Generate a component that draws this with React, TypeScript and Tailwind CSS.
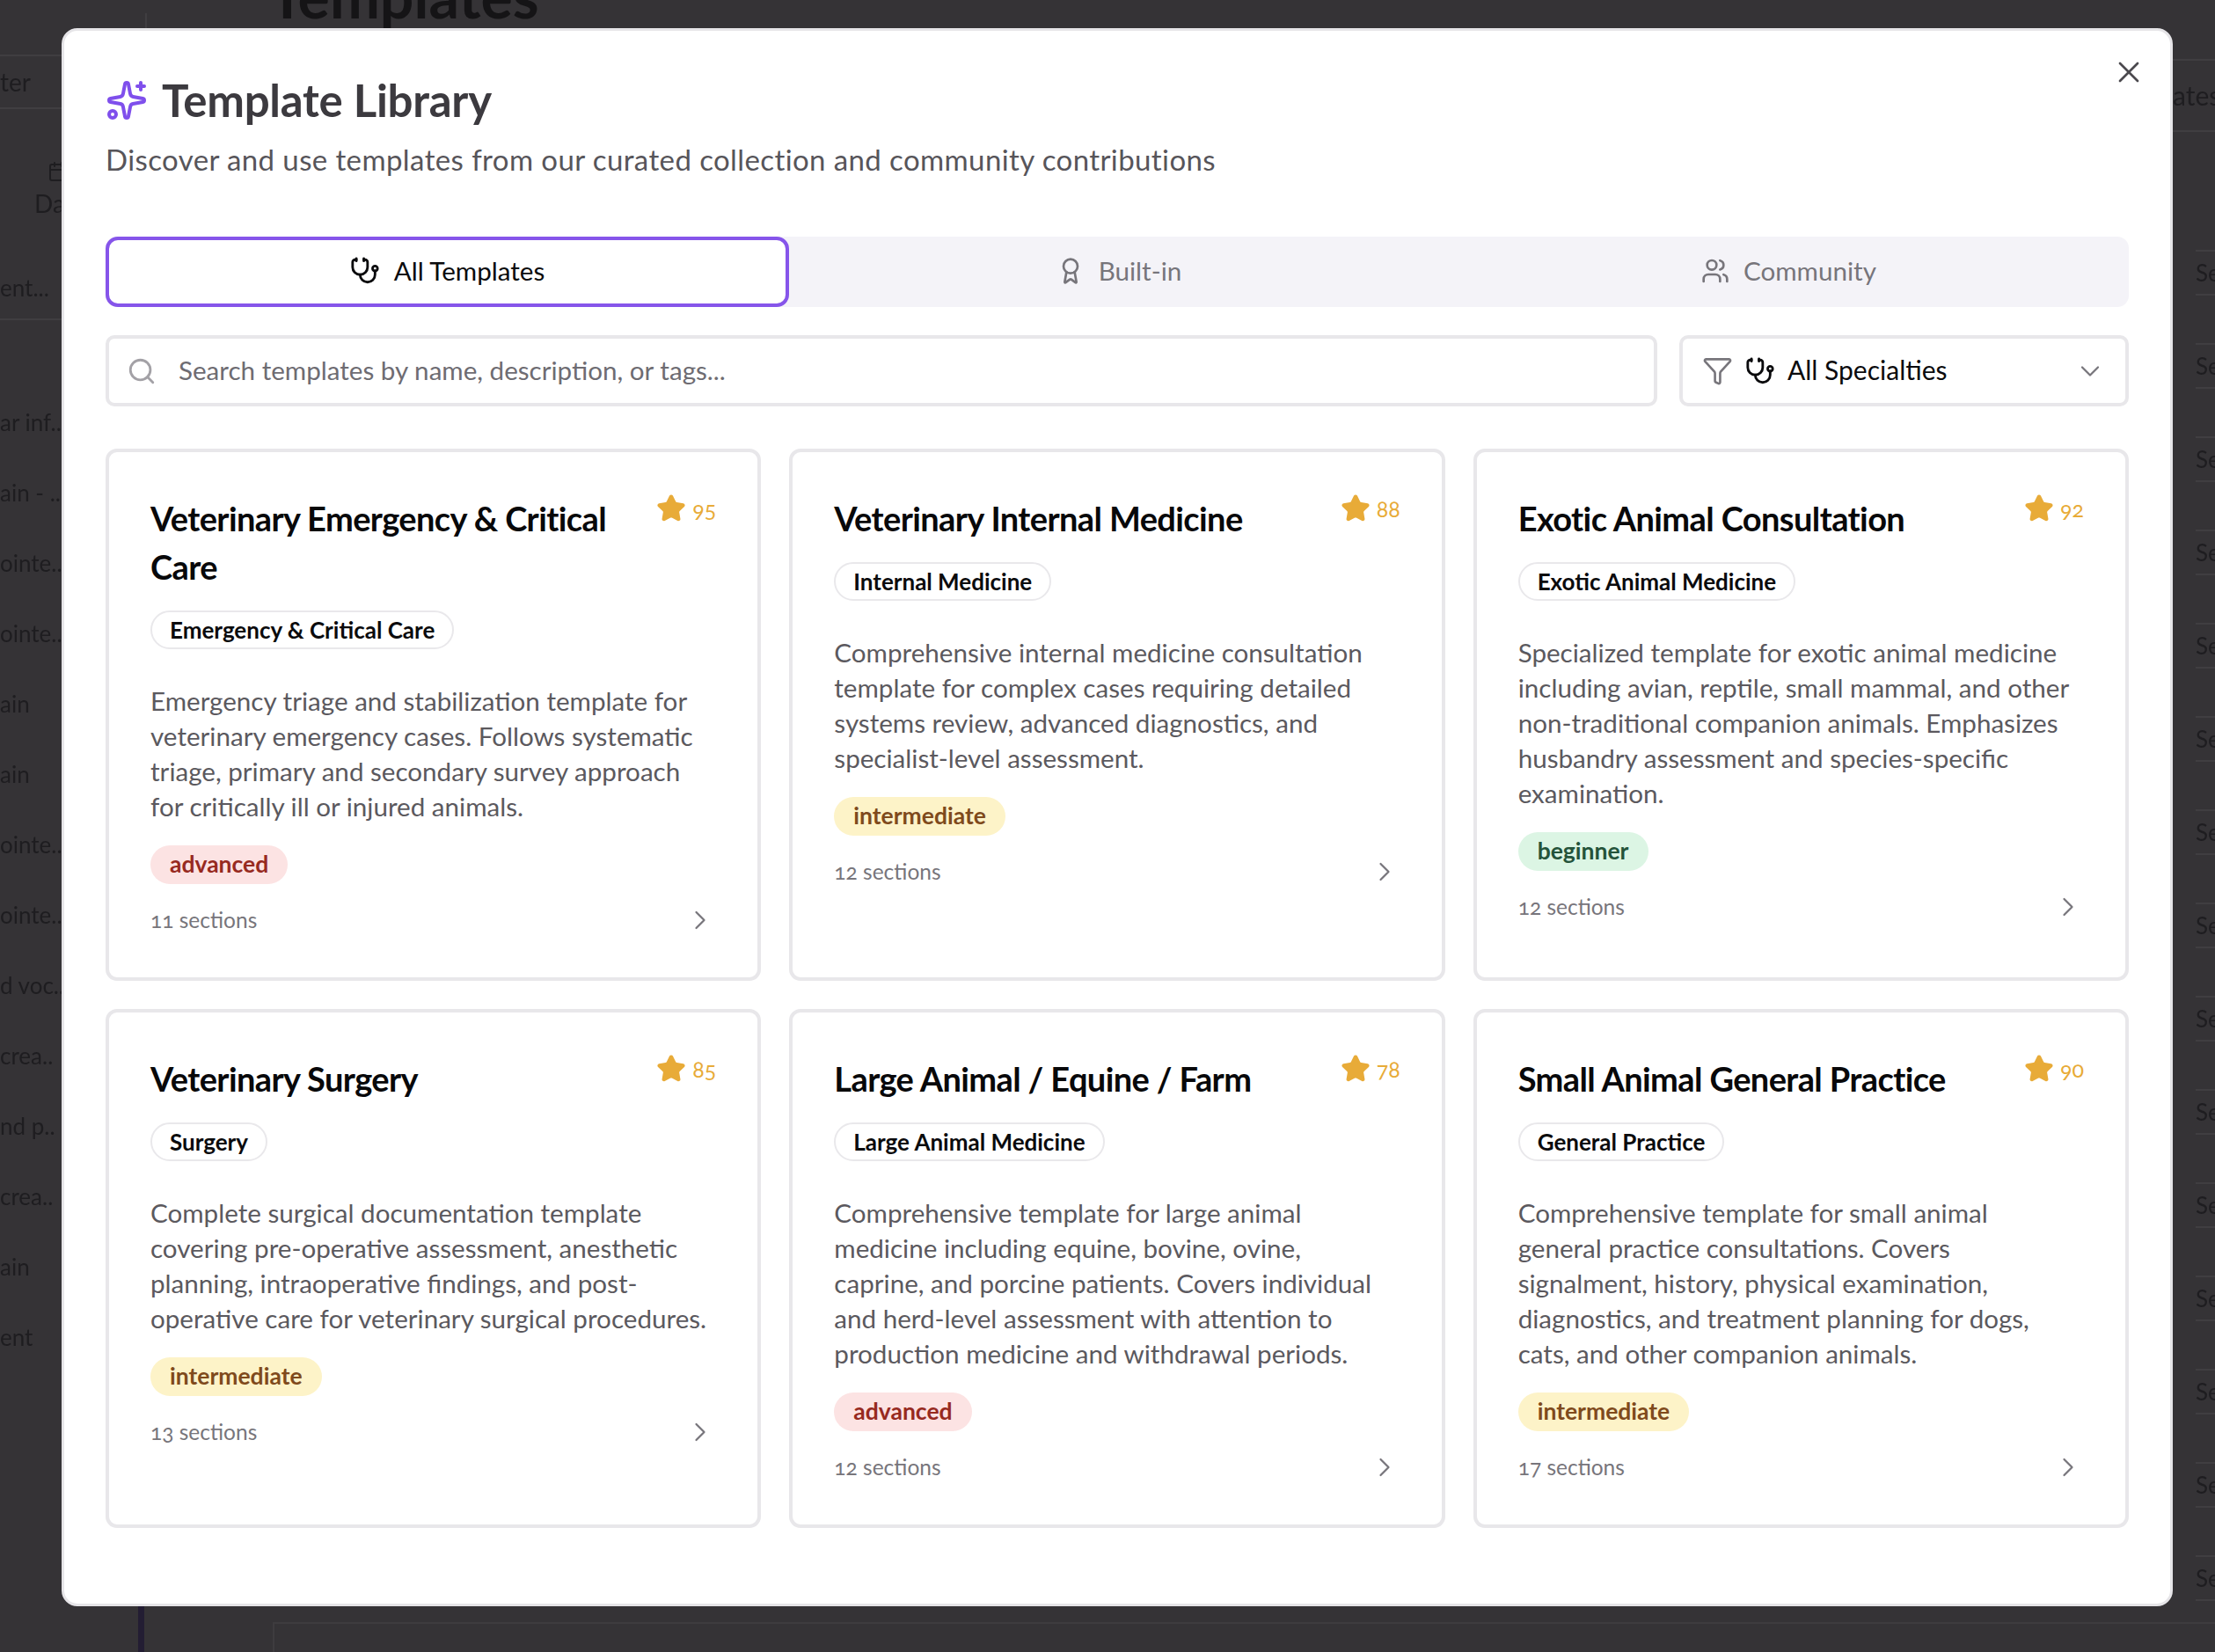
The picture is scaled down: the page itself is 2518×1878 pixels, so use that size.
import React from 'react';
import { Award, Calendar, ChevronDown, ChevronRight, Filter, Search, Sparkles, Star, Stethoscope, Users, X } from 'lucide-react';

type Level = 'beginner' | 'intermediate' | 'advanced';

interface Template {
    title: string;
    specialty: string;
    rating: number;
    description: string;
    level: Level;
    sections: number;
}

const templates: Template[] = [
    {
        title: 'Veterinary Emergency & Critical Care',
        specialty: 'Emergency & Critical Care',
        rating: 95,
        description: 'Emergency triage and stabilization template for veterinary emergency cases. Follows systematic triage, primary and secondary survey approach for critically ill or injured animals.',
        level: 'advanced',
        sections: 11,
    },
    {
        title: 'Veterinary Internal Medicine',
        specialty: 'Internal Medicine',
        rating: 88,
        description: 'Comprehensive internal medicine consultation template for complex cases requiring detailed systems review, advanced diagnostics, and specialist-level assessment.',
        level: 'intermediate',
        sections: 12,
    },
    {
        title: 'Exotic Animal Consultation',
        specialty: 'Exotic Animal Medicine',
        rating: 92,
        description: 'Specialized template for exotic animal medicine including avian, reptile, small mammal, and other non-traditional companion animals. Emphasizes husbandry assessment and species-specific examination.',
        level: 'beginner',
        sections: 12,
    },
    {
        title: 'Veterinary Surgery',
        specialty: 'Surgery',
        rating: 85,
        description: 'Complete surgical documentation template covering pre-operative assessment, anesthetic planning, intraoperative findings, and post-operative care for veterinary surgical procedures.',
        level: 'intermediate',
        sections: 13,
    },
    {
        title: 'Large Animal / Equine / Farm',
        specialty: 'Large Animal Medicine',
        rating: 78,
        description: 'Comprehensive template for large animal medicine including equine, bovine, ovine, caprine, and porcine patients. Covers individual and herd-level assessment with attention to production medicine and withdrawal periods.',
        level: 'advanced',
        sections: 12,
    },
    {
        title: 'Small Animal General Practice',
        specialty: 'General Practice',
        rating: 90,
        description: 'Comprehensive template for small animal general practice consultations. Covers signalment, history, physical examination, diagnostics, and treatment planning for dogs, cats, and other companion animals.',
        level: 'intermediate',
        sections: 17,
    },
];

const levelStyles: Record<Level, string> = {
    beginner: 'bg-[#dcf5e4] text-[#24533a]',
    intermediate: 'bg-[#fdf3c8] text-[#7f4a1c]',
    advanced: 'bg-[#fce3e3] text-[#972a1f]',
};

const leftLines = ['ar inf..', 'ain - ..', 'ointe..', 'ointe..', 'ain', 'ain', 'ointe..', 'ointe..', 'd voc..', 'crea..', 'nd p..', 'crea..', 'ain', 'ent'];
const rightRows = Array.from({ length: 15 }, (_, i) => i);

const TemplateCard: React.FC<{ template: Template }> = ({ template }) => (
    <div className="flex flex-col items-start rounded-[13px] border-[4px] border-[#e8e7ea] bg-white px-[47px] pt-[48px] pb-[49px]">
        <div className="flex w-full items-start justify-between gap-[32px]">
            <h3 className="min-w-0 flex-1 text-[38px] leading-[55px] font-bold tracking-[-0.016em] text-[#08080a]">{template.title}</h3>
            <div className="-mt-[1px] flex shrink-0 items-center gap-[7px] text-[25px] leading-[32px] text-[#e8ab38] oldstyle-nums">
                <Star className="h-[34px] w-[34px] fill-[#e8ab38]" strokeWidth={2} />
                <span>{template.rating}</span>
            </div>
        </div>
        <div className="mt-[22px] flex h-[44px] items-center rounded-full border-2 border-[#e9e8eb] px-[20px] text-[26px] font-bold text-[#0b0b0d]">
            {template.specialty}
        </div>
        <p className="mt-[39px] pr-[10px] text-[29.6px] leading-[40px] text-[#5b595e]">{template.description}</p>
        <div className={`mt-[24px] flex h-[44px] items-center rounded-full px-[22px] text-[26.5px] font-bold ${levelStyles[template.level]}`}>
            {template.level}
        </div>
        <div className="mt-[25px] flex h-[32px] w-full items-center justify-between text-[24.5px] text-[#77757b] oldstyle-nums">
            <span>{template.sections} sections</span>
            <ChevronRight className="h-[36px] w-[36px] text-[#77757b]" strokeWidth={1.5} />
        </div>
    </div>
);

export default function App() {
    return (
        <div className="relative h-[1878px] w-[2518px] overflow-hidden bg-[#353336] font-['Lato','Liberation_Sans',sans-serif]">
            {/* 背景页面（被遮罩压暗） */}
            <div className="flex h-full w-full justify-between text-[26px] text-[#1e1d20] blur-[0.6px]">
                <div className="flex w-[70px] flex-col">
                    <div className="mt-[62px] flex h-[62px] w-full items-center border-y-2 border-[#403e41] text-[28px]">ter</div>
                    <Calendar className="mt-[59px] ml-[54px] h-[24px] w-[24px] shrink-0" strokeWidth={2} />
                    <div className="mt-[3px] h-[40px] w-full pl-[39px] text-[28px]">Da</div>
                    <div className="mt-[58px] h-[36px] w-full">ent...</div>
                    <div className="mt-[18px] h-[2px] w-full bg-[#403e41]" />
                    <div className="mt-[97px] flex w-full flex-col gap-[44px]">
                        {leftLines.map((line, i) => (
                            <div key={i} className="h-[36px] whitespace-nowrap">{line}</div>
                        ))}
                    </div>
                </div>
                <div className="flex w-[48px] flex-col">
                    <div className="mt-[67px] flex h-[83px] items-center border-y-2 border-[#403e41] text-[30px] whitespace-nowrap">ates</div>
                    <div className="mt-[134px] flex flex-col gap-[54px] pl-[26px]">
                        {rightRows.map((row) => (
                            <div key={row} className="flex h-[52px] items-center border-y-2 border-[#403e41] whitespace-nowrap">Se</div>
                        ))}
                    </div>
                </div>
            </div>
            <div className="absolute top-[-41px] left-[306px] text-[68px] leading-[72px] font-bold text-[#151416] blur-[0.6px]">Templates</div>
            <div className="absolute top-[15px] left-[165px] h-[17px] w-[2px] bg-[#403e41]" />
            <div className="absolute top-[1825px] left-[157px] h-[53px] w-[7px] bg-[#231d33]" />
            <div className="absolute top-[1844px] left-[310px] h-[2px] w-[2208px] bg-[#3e3c3f]" />
            <div className="absolute top-[1844px] left-[310px] h-[34px] w-[2px] bg-[#3e3c3f]" />

            {/* 模板库弹窗 */}
            <div className="absolute top-[32px] left-[70px] h-[1794px] w-[2400px] rounded-[18px] border-[3px] border-[#e6e5e8] bg-white px-[47px] pt-[51px]">
                <button className="absolute top-[27px] right-[27px] text-[#4b494e]">
                    <X className="h-[40px] w-[40px]" strokeWidth={1.6} />
                </button>
                <div className="flex h-[56px] items-center gap-[16px]">
                    <Sparkles className="h-[48px] w-[48px] text-[#7f4fec]" strokeWidth={2} />
                    <h2 className="text-[51px] font-bold tracking-[-0.005em] text-[#3c3a3f]">Template Library</h2>
                </div>
                <p className="mt-[17px] text-[33px] leading-[44px] tracking-[0.012em] text-[#57555a]">Discover and use templates from our curated collection and community contributions</p>

                <div className="mt-[66px] flex h-[80px] rounded-[13px] bg-[#f4f3f8] text-[29.6px]">
                    <div className="flex w-[777px] items-center justify-center gap-[16px] rounded-[14px] border-[4px] border-[#8655ea] bg-white pb-[2px] text-[#0b0b0d]">
                        <Stethoscope className="h-[34px] w-[34px]" strokeWidth={2} />
                        All Templates
                    </div>
                    <div className="flex w-[750px] items-center justify-center gap-[16px] pb-[2px] text-[#77757b]">
                        <Award className="h-[32px] w-[32px]" strokeWidth={2} />
                        Built-in
                    </div>
                    <div className="flex flex-1 items-center justify-center gap-[16px] pb-[2px] text-[#77757b]">
                        <Users className="h-[32px] w-[32px]" strokeWidth={2} />
                        Community
                    </div>
                </div>

                <div className="mt-[32px] flex gap-[25px]">
                    <div className="flex h-[81px] flex-1 items-center gap-[25px] rounded-[10px] border-[4px] border-[#e8e7ea] pl-[20px] text-[29.6px] text-[#6e6c72]">
                        <Search className="h-[34px] w-[34px] text-[#a3a1a6]" strokeWidth={2} />
                        Search templates by name, description, or tags...
                    </div>
                    <div className="flex h-[81px] w-[511px] items-center rounded-[10px] border-[4px] border-[#e8e7ea] pr-[22px] pl-[22px] text-[30px] text-[#0b0b0d]">
                        <Filter className="h-[35px] w-[35px] text-[#77757b]" strokeWidth={1.8} />
                        <Stethoscope className="ml-[14px] h-[34px] w-[34px]" strokeWidth={2} />
                        <span className="ml-[14px] flex-1 pb-[2px]">All Specialties</span>
                        <ChevronDown className="h-[36px] w-[36px] text-[#77757b]" strokeWidth={1.5} />
                    </div>
                </div>

                <div className="mt-[48px] grid grid-cols-3 gap-[32px]">
                    {templates.map((template) => (
                        <TemplateCard key={template.title} template={template} />
                    ))}
                </div>
            </div>
        </div>
    );
}
